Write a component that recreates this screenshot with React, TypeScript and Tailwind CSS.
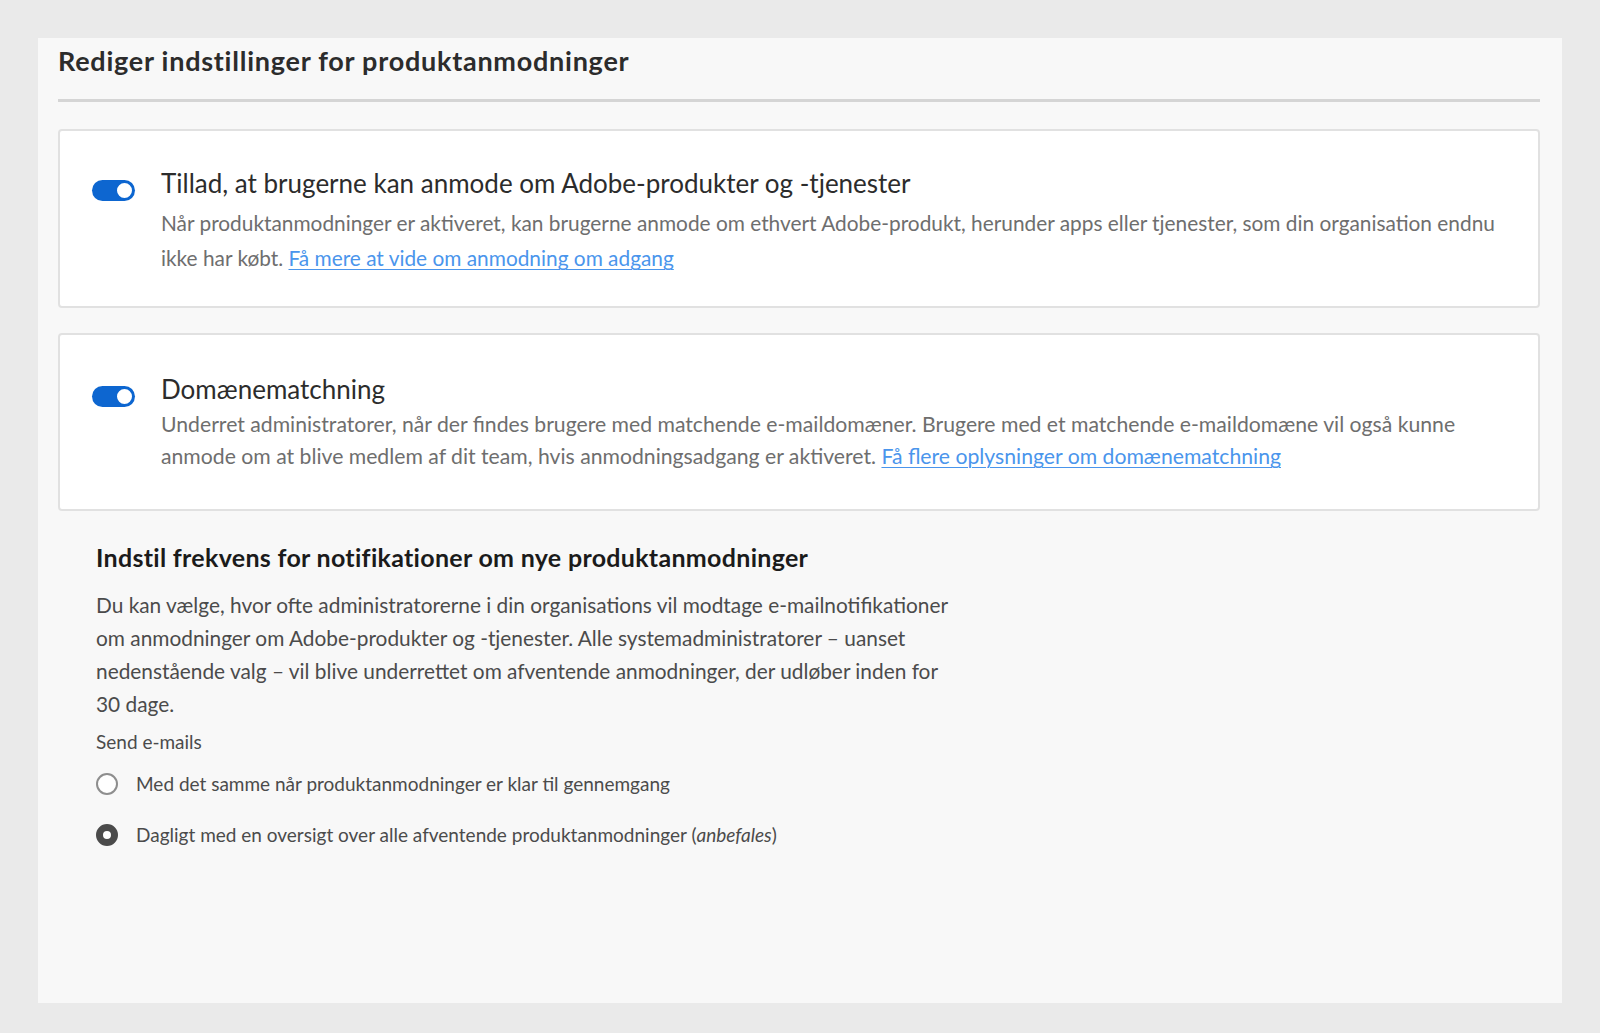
import { useState } from "react";

const font = { fontFamily: "Lato, 'Noto Sans', 'Liberation Sans', sans-serif" };

const Toggle = ({ on, onChange }: { on: boolean; onChange: () => void }) => (
  <button
    type="button"
    onClick={onChange}
    className={`relative mt-[13px] h-[21px] w-[43px] shrink-0 rounded-full ${
      on ? "bg-[#0d66d0]" : "bg-[#b3b3b3]"
    }`}
  >
    <span
      className={`absolute top-[1px] h-[19px] w-[19px] rounded-full border-[2px] bg-white ${
        on ? "left-[23px] border-[#0d66d0]" : "left-[1px] border-[#b3b3b3]"
      }`}
    />
  </button>
);

const Radio = ({
  checked,
  onSelect,
  children,
}: {
  checked: boolean;
  onSelect: () => void;
  children: React.ReactNode;
}) => (
  <label className="flex h-[30px] cursor-pointer items-center gap-[18px]" onClick={onSelect}>
    <span
      className={`h-[22px] w-[22px] shrink-0 rounded-full bg-white ${
        checked ? "border-[7px] border-[#4b4b4b]" : "border-[2px] border-[#8e8e8e]"
      }`}
    />
    <span className="text-[19px] text-[#4b4b4b]">{children}</span>
  </label>
);

export default function App() {
  const [requests, setRequests] = useState(true);
  const [domain, setDomain] = useState(true);
  const [freq, setFreq] = useState("daily");

  return (
    <div className="h-[1033px] w-full bg-[#eaeaea] px-[38px] pt-[38px]" style={font}>
      <div className="h-[965px] w-[1524px] bg-[#f8f8f8] pl-[20px] pr-[22px]">
        <h1 className="pt-[7px] text-[27px] font-bold leading-[32px] tracking-[0.75px] text-[#2c2c2c]">
          Rediger indstillinger for produktanmodninger
        </h1>
        <div className="mt-[22px] h-[3px] bg-[#d5d5d5]" />

        <div className="mt-[27px] h-[179px] rounded-[4px] border-[2px] border-[#e1e1e1] bg-white pl-[32px] pt-[36px]">
          <div className="flex gap-[26px]">
            <Toggle on={requests} onChange={() => setRequests(!requests)} />
            <div>
              <h2 className="text-[26px] leading-[32px] text-[#2c2c2c]">
                Tillad, at brugerne kan anmode om Adobe-produkter og -tjenester
              </h2>
              <p className="mt-[6px] text-[20.85px] leading-[35px] text-[#6e6e6e]">
                Når produktanmodninger er aktiveret, kan brugerne anmode om ethvert Adobe-produkt, herunder apps eller tjenester, som din organisation endnu
                <br />
                ikke har købt.{" "}
                <a href="#" className="text-[#4a95ec] underline decoration-[1px] underline-offset-[3px]">
                  Få mere at vide om anmodning om adgang
                </a>
              </p>
            </div>
          </div>
        </div>

        <div className="mt-[25px] h-[178px] rounded-[4px] border-[2px] border-[#e1e1e1] bg-white pl-[32px] pt-[38px]">
          <div className="flex gap-[26px]">
            <Toggle on={domain} onChange={() => setDomain(!domain)} />
            <div>
              <h2 className="text-[26px] leading-[32px] text-[#2c2c2c]">Domænematchning</h2>
              <p className="mt-[3px] text-[21.2px] leading-[32px] text-[#6e6e6e]">
                Underret administratorer, når der findes brugere med matchende e-maildomæner. Brugere med et matchende e-maildomæne vil også kunne
                <br />
                anmode om at blive medlem af dit team, hvis anmodningsadgang er aktiveret.{" "}
                <a href="#" className="text-[#4a95ec] underline decoration-[1px] underline-offset-[3px]">
                  Få flere oplysninger om domænematchning
                </a>
              </p>
            </div>
          </div>
        </div>

        <div className="pl-[38px] pt-[30px]">
          <h3 className="text-[25px] font-bold leading-[32px] tracking-[0.3px] text-[#1b1b1b]">
            Indstil frekvens for notifikationer om nye produktanmodninger
          </h3>
          <p className="mt-[15px] whitespace-nowrap text-[20.85px] leading-[33px] text-[#4b4b4b]">
            Du kan vælge, hvor ofte administratorerne i din organisations vil modtage e-mailnotifikationer
            <br />
            om anmodninger om Adobe-produkter og -tjenester. Alle systemadministratorer – uanset
            <br />
            nedenstående valg – vil blive underrettet om afventende anmodninger, der udløber inden for
            <br />
            30 dage.
          </p>
          <div className="mt-[7px] text-[19px] leading-[30px] text-[#4b4b4b]">Send e-mails</div>
          <div className="mt-[12px] flex flex-col gap-[21px]">
            <Radio checked={freq === "now"} onSelect={() => setFreq("now")}>
              Med det samme når produktanmodninger er klar til gennemgang
            </Radio>
            <Radio checked={freq === "daily"} onSelect={() => setFreq("daily")}>
              Dagligt med en oversigt over alle afventende produktanmodninger (<i>anbefales</i>)
            </Radio>
          </div>
        </div>
      </div>
    </div>
  );
}
